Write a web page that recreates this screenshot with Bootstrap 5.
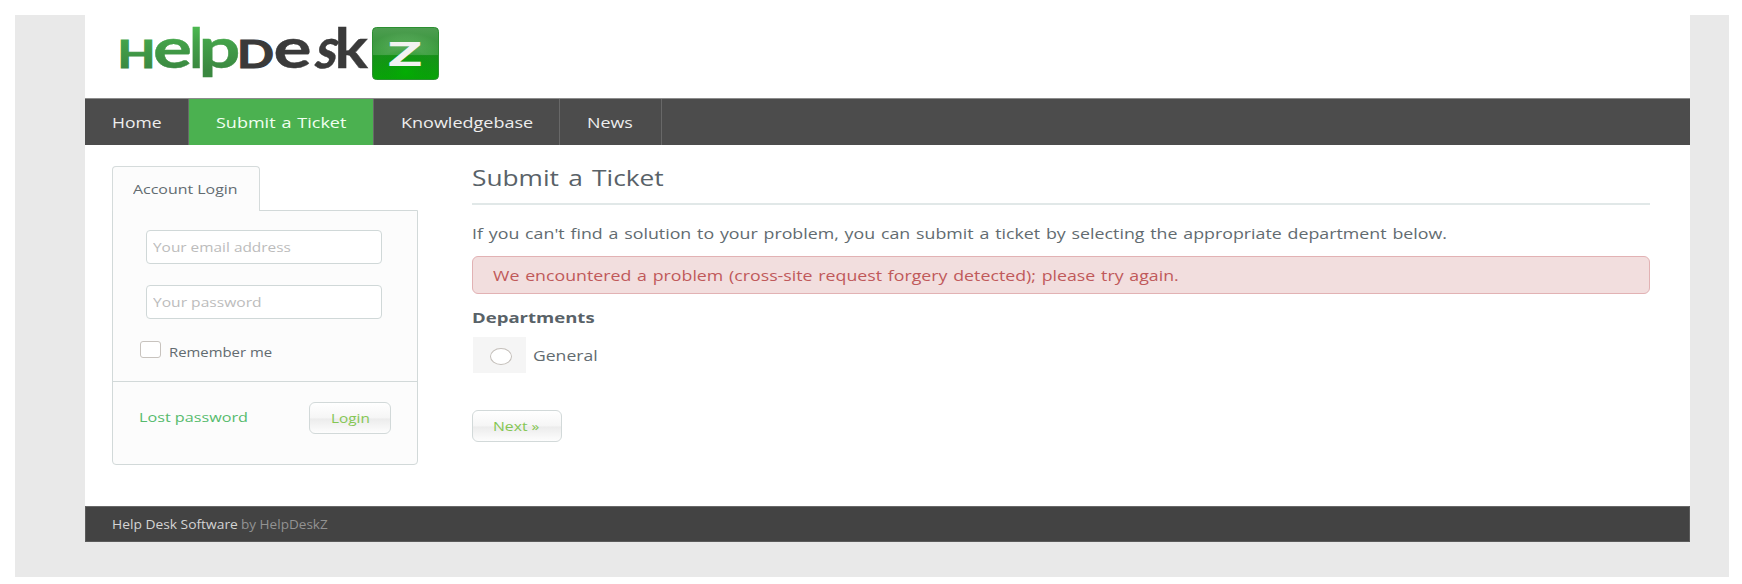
<!DOCTYPE html>
<html lang="en">
<head>
<meta charset="utf-8">
<meta name="viewport" content="width=device-width, initial-scale=1">
<title>Submit a Ticket - HelpDeskZ</title>
<link href="https://cdn.jsdelivr.net/npm/bootstrap@5.3.0/dist/css/bootstrap.min.css" rel="stylesheet">
<style>
body{background:#fff;font-family:"Open Sans","Noto Sans",sans-serif;font-size:15px;color:#626b70;overflow:hidden}
.backdrop{width:1714px;height:562px;margin:15px 0 0 15px;background:#e9e9e9;padding:0 39px 0 70px}
.sheet{background:#fff;height:527px}
/* extended lettering */
.ext{display:inline-block;white-space:nowrap;transform-origin:0 50%;transform:scaleX(var(--sx,1.21))}
.logo-row{height:83px;padding:5px 0 0 30px}
.main-nav{height:47px;background:#4c4c4c;border-top:1px solid #8c8c8c}
.main-nav .nav-link{height:46px;line-height:46px;padding:0 0 0 27px;color:#eee;border-right:1px solid #686868;border-radius:0}
.main-nav .nav-link.active{background:#4bb150;color:#f1fff1}
.w-home{width:104px}.w-ticket{width:185px}.w-kb{width:186px}.w-news{width:102px}
.body-row{height:361px;padding:0 40px 0 27px}
.side{width:306px;padding-top:21px;font-size:13px}
.side-tab{width:148px;height:45px;line-height:44px;padding-left:20px;background:#fcfcfc;border:1px solid #d5dbdb;border-bottom:0;border-radius:4px 4px 0 0;position:relative;z-index:1;margin-bottom:-1px}
.side-panel{height:255px;background:#fcfcfc;border:1px solid #d2d9d9;border-radius:0 0 4px 4px}
.side-fields{height:171px;border-bottom:1px solid #d2d9d9;padding:19px 0 0 28px}
.field{width:236px;height:34px;line-height:32px;margin-left:5px;padding:0 0 0 6px;border:1px solid #d0d8d8;border-radius:4px;background:#fff;color:#bcbcbc;font-size:13px}
.field + .field{margin-top:21px}
.box{width:21px;height:17px;margin-left:-1px;border:1px solid #c8c3be;border-radius:3px;background:#fff}
.remember{margin-top:18px;height:30px}
.remember .ext{--sx:1.145;margin:2px 0 0 8px;line-height:26px}
.btn-soft{height:32px;padding:0;border:1px solid #d2d9d9;border-radius:6px;background:linear-gradient(#fff,#f6f6f6 48%,#ececec 54%,#fdfdfd);color:#84c653;font-size:13px;text-align:left;line-height:30px}
.side-foot{padding:20px 26px 0 26px}
.lost{color:#56bb6d;text-decoration:none}
.main{width:1178px;margin-left:54px;padding-top:17px}
.main h1{font-size:22px;line-height:31px;height:43px;margin:0;border-bottom:2px solid #e1e8e8;color:#596268;word-spacing:2px}
.intro{margin:18px 0 0;height:34px;line-height:21px;word-spacing:1px}
.notice{height:38px;line-height:37px;margin:-1px 0 0;padding:0 0 0 20px;background:#f2dede;border:1px solid #e2b2b4;border-radius:6px;color:#c0595a;word-spacing:1px}
.dept-title{font-size:15px;font-weight:700;line-height:24px;margin:11px 0 8px;color:#596268}
.pick{width:53px;height:36px;margin-left:1px;background:#f5f5f5}
.dot{width:22px;height:17px;margin:3px 0 0 2px;border:1px solid #c4bfba;border-radius:50%;background:#fff}
.foot{height:36px;line-height:36px;background:#434343;border:1px solid #5b5b5b;border-top-color:#686868;padding-left:26px;font-size:12px;color:#929292}
.foot a{color:#d4d4d4;text-decoration:none}
</style>
</head>
<body>
<div class="backdrop">
<div class="sheet">
  <header class="logo-row">
    <svg class="d-block" width="330" height="66" viewBox="115 20 330 66" role="img" aria-label="HelpDeskZ">
      <defs>
        <linearGradient id="leaf" gradientUnits="userSpaceOnUse" x1="0" y1="27" x2="0" y2="70"><stop offset="0" stop-color="#4cb850"/><stop offset=".35" stop-color="#43a149"/><stop offset="1" stop-color="#3a8840"/></linearGradient>
        <linearGradient id="tile" x1="0" y1="0" x2="0" y2="1"><stop offset="0" stop-color="#7bb57d"/><stop offset=".52" stop-color="#45a348"/><stop offset=".54" stop-color="#17911a"/><stop offset="1" stop-color="#07a507"/></linearGradient>
        <radialGradient id="glow" cx=".5" cy=".85" r=".75"><stop offset="0" stop-color="#00b400" stop-opacity=".7"/><stop offset=".6" stop-color="#0a960a" stop-opacity="0"/><stop offset="1" stop-color="#0b7a10" stop-opacity=".4"/></radialGradient>
      </defs>
      <g font-family="Lato,sans-serif" font-weight="700" fill="url(#leaf)" stroke="url(#leaf)" stroke-width=".4">
        <text x="117.500" y="67.500" font-size="37.500" stroke-width="1" textLength="38" lengthAdjust="spacingAndGlyphs">H</text>
        <text x="153" y="68" font-size="56" textLength="39" lengthAdjust="spacingAndGlyphs">e</text>
        <text x="189.500" y="67.500" font-size="55" textLength="13.500" lengthAdjust="spacingAndGlyphs">l</text>
        <text x="198.500" y="68" font-size="56" textLength="42" lengthAdjust="spacingAndGlyphs">p</text>
        <g fill="#3a3a3a" stroke="#3a3a3a">
          <text x="237" y="67.500" font-size="37.500" stroke-width="1" textLength="37" lengthAdjust="spacingAndGlyphs">D</text>
          <text x="273.500" y="68" font-size="56" textLength="38" lengthAdjust="spacingAndGlyphs">e</text>
          <text transform="translate(312.500 68) skewX(-14)" font-size="56" textLength="22" lengthAdjust="spacingAndGlyphs">s</text>
          <text x="334.500" y="67.500" font-size="55" textLength="33.500" lengthAdjust="spacingAndGlyphs">k</text>
        </g>
      </g>
      <rect x="372.500" y="27.500" width="66" height="52" rx="4" fill="url(#tile)"/>
      <rect x="372.500" y="27.500" width="66" height="52" rx="4" fill="url(#glow)" stroke="#2c8f31"/>
      <text x="388" y="65.500" font-family="Open Sans,sans-serif" font-weight="700" font-size="33.500" textLength="34" lengthAdjust="spacingAndGlyphs" fill="#f2f2f2">Z</text>
    </svg>
  </header>
  <nav class="main-nav nav flex-nowrap">
    <a class="nav-link w-home" href="#"><span class="ext" style="--sx:1.17">Home</span></a>
    <a class="nav-link active w-ticket" href="#"><span class="ext" style="--sx:1.2;word-spacing:1px">Submit a Ticket</span></a>
    <a class="nav-link w-kb" href="#"><span class="ext" style="--sx:1.2">Knowledgebase</span></a>
    <a class="nav-link w-news" href="#"><span class="ext" style="--sx:1.19">News</span></a>
  </nav>
  <div class="body-row d-flex">
    <aside class="side flex-shrink-0">
      <div class="side-tab"><span class="ext" style="--sx:1.225">Account Login</span></div>
      <div class="side-panel">
        <div class="side-fields">
          <div class="field"><span class="ext" style="--sx:1.185">Your email address</span></div>
          <div class="field"><span class="ext" style="--sx:1.2">Your password</span></div>
          <label class="remember d-flex align-items-start"><span class="box mt-1"></span><span class="ext">Remember me</span></label>
        </div>
        <div class="side-foot d-flex justify-content-between align-items-center">
          <a class="lost" href="#"><span class="ext" style="--sx:1.245">Lost password</span></a>
          <button class="btn btn-soft" style="width:82px;padding-left:21px"><span class="ext" style="--sx:1.18">Login</span></button>
        </div>
      </div>
    </aside>
    <main class="main flex-shrink-0">
      <h1 class="fw-normal"><span class="ext" style="--sx:1.195">Submit a Ticket</span></h1>
      <p class="intro"><span class="ext" style="--sx:1.186">If you can't find a solution to your problem, you can submit a ticket by selecting the appropriate department below.</span></p>
      <div class="notice"><span class="ext" style="--sx:1.183">We encountered a problem (cross-site request forgery detected); please try again.</span></div>
      <h2 class="dept-title"><span class="ext" style="--sx:1.235">Departments</span></h2>
      <label class="d-flex align-items-center"><span class="pick d-flex align-items-center justify-content-center"><span class="dot"></span></span><span class="ext" style="--sx:1.17;margin-left:7px">General</span></label>
      <button class="btn btn-soft d-block" style="width:90px;padding-left:20px;margin-top:37px"><span class="ext">Next »</span></button>
    </main>
  </div>
  <footer class="foot d-flex"><a href="#" style="width:129px"><span class="ext" style="--sx:1.15">Help Desk Software</span></a><span class="ext" style="--sx:1.13">by HelpDeskZ</span></footer>
</div>
</div>
<script src="https://cdn.jsdelivr.net/npm/bootstrap@5.3.0/dist/js/bootstrap.bundle.min.js"></script>
</body>
</html>
